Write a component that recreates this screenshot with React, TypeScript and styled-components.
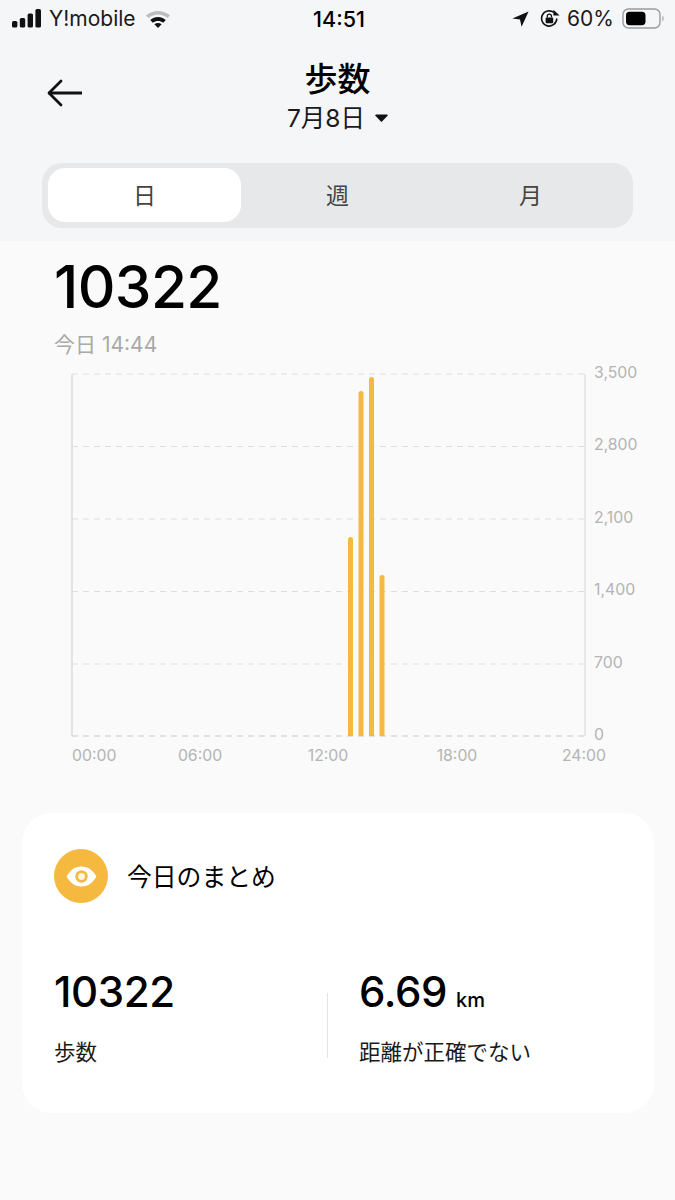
import React from 'react';
import styled, { createGlobalStyle } from 'styled-components';

const GlobalStyle = createGlobalStyle`
  html, body {
    margin: 0;
    padding: 0;
    background-color: #fafafa;
  }
  body {
    font-family: Inter, "Noto Sans CJK JP", sans-serif;
    color: #000000;
  }
`;

const Page = styled.div`
  width: 675px;
  height: 1200px;
  overflow: hidden;
  background-color: #fafafa;
`;

const Header = styled.header`
  height: 241px;
  box-sizing: border-box;
  background-color: #f5f6f8;
`;

const StatusBar = styled.div`
  display: grid;
  grid-template-columns: 1fr auto 1fr;
  align-items: center;
  height: 37px;
  padding: 0 9px 0 12px;
  font-size: 21px;
`;

const StatusGroup = styled.div<{ end?: boolean }>`
  display: flex;
  align-items: center;
  justify-content: ${(props) => (props.end ? 'flex-end' : 'flex-start')};
`;

const StatusIcons = styled.div`
  display: flex;
  align-items: center;
  gap: 11px;
`;

const Carrier = styled.span`
  margin: 0 9px 0 7px;
  color: #1a1a1a;
`;

const Clock = styled.span`
  font-weight: 500;
  font-size: 21.5px;
`;

const Percent = styled.span`
  margin: 0 8px 0 7px;
  color: #1a1a1a;
`;

const TitleBar = styled.div`
  position: relative;
  display: flex;
  flex-direction: column;
  align-items: center;
  height: 126px;
  padding-top: 22px;
  box-sizing: border-box;
`;

const BackButton = styled.button`
  position: absolute;
  left: 47px;
  top: 42px;
  display: flex;
  padding: 0;
  border: none;
  background: none;
`;

const Title = styled.h1`
  margin: 0;
  font-size: 33px;
  line-height: 40px;
  font-weight: 500;
`;

const DateRow = styled.div`
  display: flex;
  align-items: center;
  gap: 10px;
  margin-top: 1px;
  font-size: 24.5px;
  line-height: 36px;
  color: #1a1a1a;
`;

const SegmentTrack = styled.div`
  display: grid;
  grid-template-columns: repeat(3, 193px);
  margin: 0 42px;
  width: 591px;
  height: 65px;
  box-sizing: border-box;
  padding: 5px 6px 6px;
  border-radius: 20px;
  background-color: #e7e8ea;
`;

const Segment = styled.div<{ active?: boolean }>`
  display: flex;
  align-items: center;
  justify-content: center;
  padding-bottom: 3px;
  border-radius: 17px;
  font-size: 23px;
  color: #444444;
  background-color: ${(props) => (props.active ? '#ffffff' : 'transparent')};
`;

const Summary = styled.section`
  padding: 11px 54px 0;
`;

const BigNumber = styled.div`
  font-size: 58.5px;
  line-height: 70px;
  font-weight: 500;
  letter-spacing: -0.6px;
`;

const Updated = styled.div`
  margin-top: 8px;
  font-size: 21px;
  line-height: 30px;
  color: #a9a9a9;
`;

const ChartBox = styled.div`
  height: 453px;
  svg {
    display: block;
  }
  text {
    font-family: Inter, sans-serif;
    font-size: 15.8px;
    fill: #b4b4b4;
  }
`;

const Card = styled.section`
  margin: 0 21px 0 22px;
  height: 300px;
  box-sizing: border-box;
  padding: 36px 32px 0;
  border-radius: 30px;
  background-color: #ffffff;
`;

const CardHeading = styled.div`
  display: flex;
  align-items: center;
  gap: 19px;
`;

const CardIcon = styled.div`
  display: flex;
  align-items: center;
  justify-content: center;
  width: 54px;
  height: 54px;
  border-radius: 50%;
  background-color: #f5b93f;
`;

const CardTitle = styled.h2`
  margin: 0 0 2px;
  font-size: 24.8px;
  font-weight: 400;
`;

const Stats = styled.div`
  display: grid;
  grid-template-columns: 273px 1fr;
  margin-top: 90px;
`;

const Stat = styled.div<{ divided?: boolean }>`
  ${(props) =>
    props.divided ? 'border-left: 1px solid #e4e4e4; padding-left: 31px;' : ''}
  height: 65px;
`;

const StatValue = styled.div`
  height: 0;
  margin-top: -29px;
  font-size: 42px;
  line-height: 56px;
  font-weight: 500;
  letter-spacing: -0.4px;
  white-space: nowrap;
`;

const Unit = styled.span`
  margin-left: 9px;
  font-size: 20px;
  letter-spacing: 0;
`;

const StatLabel = styled.div`
  margin-top: 73px;
  font-size: 21.5px;
  line-height: 30px;
  color: #1a1a1a;
`;

const gridLines = [
  { y: 374, label: '3,500' },
  { y: 446.5, label: '2,800' },
  { y: 519, label: '2,100' },
  { y: 591.5, label: '1,400' },
  { y: 664, label: '700' },
  { y: 736, label: '0' },
];

const hourLabels = [
  { x: 72, label: '00:00', anchor: 'start' },
  { x: 200, label: '06:00', anchor: 'middle' },
  { x: 328, label: '12:00', anchor: 'middle' },
  { x: 457, label: '18:00', anchor: 'middle' },
  { x: 606, label: '24:00', anchor: 'end' },
];

const bars = [
  { x: 350.5, top: 537 },
  { x: 361, top: 391 },
  { x: 371.5, top: 377 },
  { x: 382, top: 575 },
];

const CHART_TOP = 360;

function StepsChart() {
  return (
    <svg width="675" height="453" viewBox={`0 ${CHART_TOP} 675 453`}>
      <line x1="72" y1="374" x2="72" y2="736" stroke="#dedede" strokeWidth="1.5" />
      <line x1="585" y1="374" x2="585" y2="736" stroke="#dcdcdc" strokeWidth="1.2" />
      {gridLines.map((line) => (
        <g key={line.label}>
          <line
            x1="72"
            y1={line.y}
            x2="585"
            y2={line.y}
            stroke={line.label === '0' ? '#c8c8c8' : '#dedede'}
            strokeWidth="1.2"
            strokeDasharray="6 5"
          />
          <text x="594" y={line.y + 3.5}>
            {line.label}
          </text>
        </g>
      ))}
      {bars.map((bar) => (
        <path
          key={bar.x}
          d={`M${bar.x - 2.5} 736V${bar.top + 2.5}a2.5 2.5 0 0 1 5 0V736z`}
          fill="#f5b93f"
        />
      ))}
      {hourLabels.map((hour) => (
        <text
          key={hour.label}
          x={hour.x}
          y="761"
          textAnchor={hour.anchor as 'start' | 'middle' | 'end'}
        >
          {hour.label}
        </text>
      ))}
    </svg>
  );
}

function SignalIcon() {
  return (
    <svg width="30" height="19" viewBox="0 0 30 19" fill="#111111">
      <rect x="0" y="12" width="5.4" height="6.5" rx="1.6" />
      <rect x="7.8" y="9" width="5.4" height="9.5" rx="1.6" />
      <rect x="15.6" y="4.5" width="5.4" height="14" rx="1.6" />
      <rect x="23.4" y="0" width="5.6" height="18.5" rx="1.6" />
    </svg>
  );
}

function WifiIcon() {
  return (
    <svg width="26" height="20" viewBox="0 0 26 20">
      <path d="M1 6.5C8 0.5 18 0.5 25 6.5L22.6 9C16.8 4.2 9.2 4.2 3.4 9z" fill="#bdbdbd" />
      <path d="M5.2 11C10 7 16 7 20.8 11L18.2 13.8C15 11.4 11 11.4 7.8 13.8z" fill="#111111" />
      <path d="M9.4 15.2C11.6 13.6 14.4 13.6 16.6 15.2L13 19z" fill="#111111" />
    </svg>
  );
}

function LocationIcon() {
  return (
    <svg width="17" height="16" viewBox="0 0 17 16" fill="#111111">
      <path d="M16.6 0.4L0.4 7.4L8 8.4L9.6 15.8z" />
    </svg>
  );
}

function RotationLockIcon() {
  return (
    <svg width="20" height="19" viewBox="0 0 20 19" fill="none">
      <path d="M16.8 9.6A7.6 7.6 0 1 1 13.8 3.4" stroke="#111111" strokeWidth="1.6" />
      <path d="M13.4 0.8L19.6 6.6H13.4z" fill="#111111" />
      <rect x="5.6" y="8.6" width="7.6" height="5.6" rx="1" fill="#111111" />
      <path d="M7.3 8.6V7.2a2.1 2.1 0 0 1 4.2 0V8.6" stroke="#111111" strokeWidth="1.3" />
    </svg>
  );
}

function BatteryIcon() {
  return (
    <svg width="44" height="21" viewBox="0 0 44 21" fill="none">
      <rect x="1" y="1" width="37" height="19" rx="5.5" stroke="#9a9a9a" strokeWidth="1.4" />
      <rect x="4" y="3.8" width="19.5" height="13.4" rx="3.6" fill="#000000" />
      <path d="M40.5 7.5c1.4.5 1.4 5.5 0 6z" fill="#9a9a9a" />
    </svg>
  );
}

function BackArrow() {
  return (
    <svg width="36" height="28" viewBox="0 0 36 28" fill="none" stroke="#111111">
      <path d="M1.5 14H35" strokeWidth="2.8" />
      <path d="M14 2L2 14L14 26" strokeWidth="2.8" strokeLinecap="round" strokeLinejoin="round" />
    </svg>
  );
}

function Caret() {
  return (
    <svg width="13" height="8" viewBox="0 0 13 8" fill="#111111">
      <path d="M1 0.5H12a0.8 0.8 0 0 1 .6 1.3L7 7.4a0.8 0.8 0 0 1-1.1 0L.4 1.8A.8.8 0 0 1 1 .5z" />
    </svg>
  );
}

function EyeIcon() {
  return (
    <svg width="31" height="21" viewBox="0 0 31 21">
      <path d="M0.6 10.5C4.6 3.4 9.6 0.5 15.5 0.5S26.4 3.4 30.4 10.5C26.4 17.6 21.4 20.5 15.5 20.5S4.6 17.6 0.6 10.5z" fill="#ffffff" />
      <circle cx="15.5" cy="10.5" r="6.2" fill="#f5b93f" />
      <circle cx="15.5" cy="10.5" r="3.4" fill="#fff6e2" />
    </svg>
  );
}

export default function App() {
  return (
    <Page>
      <GlobalStyle />
      <Header>
        <StatusBar>
          <StatusGroup>
            <SignalIcon />
            <Carrier>Y!mobile</Carrier>
            <WifiIcon />
          </StatusGroup>
          <Clock>14:51</Clock>
          <StatusGroup end>
            <StatusIcons>
              <LocationIcon />
              <RotationLockIcon />
            </StatusIcons>
            <Percent>60%</Percent>
            <BatteryIcon />
          </StatusGroup>
        </StatusBar>
        <TitleBar>
          <BackButton>
            <BackArrow />
          </BackButton>
          <Title>歩数</Title>
          <DateRow>
            7月8日
            <Caret />
          </DateRow>
        </TitleBar>
        <SegmentTrack>
          <Segment active>日</Segment>
          <Segment>週</Segment>
          <Segment>月</Segment>
        </SegmentTrack>
      </Header>
      <Summary>
        <BigNumber>10322</BigNumber>
        <Updated>今日 14:44</Updated>
      </Summary>
      <ChartBox>
        <StepsChart />
      </ChartBox>
      <Card>
        <CardHeading>
          <CardIcon>
            <EyeIcon />
          </CardIcon>
          <CardTitle>今日のまとめ</CardTitle>
        </CardHeading>
        <Stats>
          <Stat>
            <StatValue>10322</StatValue>
            <StatLabel>歩数</StatLabel>
          </Stat>
          <Stat divided>
            <StatValue>
              6.69<Unit>km</Unit>
            </StatValue>
            <StatLabel>距離が正確でない</StatLabel>
          </Stat>
        </Stats>
      </Card>
    </Page>
  );
}
